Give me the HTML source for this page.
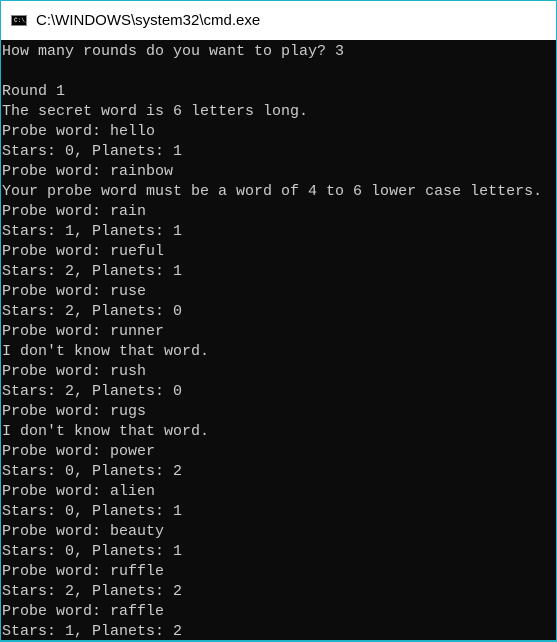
<!DOCTYPE html>
<html><head><style>
html,body{margin:0;padding:0;}
body{width:557px;height:642px;background:#0c0c0c;position:relative;overflow:hidden;}
#frame{position:absolute;left:0;top:0;width:555px;height:640px;border:1px solid #1eb4c8;}
#title{position:absolute;left:1px;top:1px;width:556px;height:39px;background:#fff;}
#title span{position:absolute;left:35px;top:11px;font:15px "Liberation Sans",sans-serif;color:#000;}
#icon{position:absolute;left:10px;top:14px;width:16px;height:11px;background:#000;border:1px solid #888;box-sizing:border-box;}
#icon i{position:absolute;left:2px;top:2px;font:bold 6px "Liberation Mono",monospace;color:#ccc;font-style:normal;line-height:6px}
#con{position:absolute;left:2px;top:42px;margin:0;font:15px/20px "Liberation Mono",monospace;color:#cccccc;white-space:pre;}
#bottom{position:absolute;left:0;top:640px;width:557px;height:2px;background:#1eb4c8}
</style></head><body>
<div id="title"><div id="icon"><i>C:\_</i></div><span>C:\WINDOWS\system32\cmd.exe</span></div>
<pre id="con">How many rounds do you want to play? 3

Round 1
The secret word is 6 letters long.
Probe word: hello
Stars: 0, Planets: 1
Probe word: rainbow
Your probe word must be a word of 4 to 6 lower case letters.
Probe word: rain
Stars: 1, Planets: 1
Probe word: rueful
Stars: 2, Planets: 1
Probe word: ruse
Stars: 2, Planets: 0
Probe word: runner
I don't know that word.
Probe word: rush
Stars: 2, Planets: 0
Probe word: rugs
I don't know that word.
Probe word: power
Stars: 0, Planets: 2
Probe word: alien
Stars: 0, Planets: 1
Probe word: beauty
Stars: 0, Planets: 1
Probe word: ruffle
Stars: 2, Planets: 2
Probe word: raffle
Stars: 1, Planets: 2</pre>
<div id="frame"></div>
<div id="bottom"></div>
</body></html>
